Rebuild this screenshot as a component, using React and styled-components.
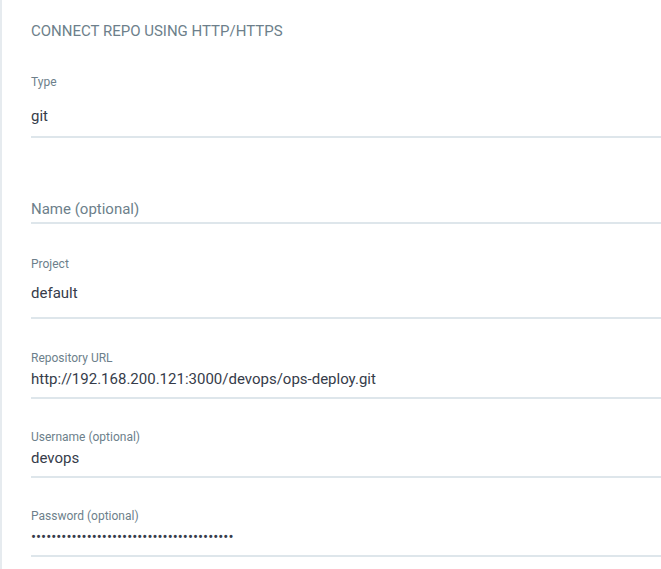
import React from "react";
import styled, { createGlobalStyle } from "styled-components";

const GlobalStyle = createGlobalStyle`
  html, body {
    margin: 0;
    padding: 0;
    background: #ffffff;
  }
  body {
    font-family: Roboto, "Liberation Sans", Arial, sans-serif;
  }
  * { box-sizing: border-box; }
`;

const Panel = styled.div`
  min-height: 569px;
  border-left: 2px solid #e6ebef;
  padding: 22px 0 0 29px;
  display: flex;
  flex-direction: column;
`;

const Title = styled.h6`
  margin: 0;
  font-size: 15px;
  line-height: 18px;
  font-weight: 400;
  color: #6d7f8b;
  letter-spacing: 0;
`;

const Field = styled.div`
  display: flex;
  flex-direction: column;
  margin-top: ${(p) => p.$top}px;
  padding-bottom: ${(p) => p.$pad}px;
  border-bottom: 2px solid #dee6eb;
`;

const Label = styled.label`
  display: block;
  height: 14px;
  font-size: 12px;
  line-height: 14px;
  color: #6d7f8b;
  margin-bottom: ${(p) => p.$gap}px;
`;

const Input = styled.input`
  display: block;
  width: 100%;
  height: 20px;
  border: none;
  outline: none;
  padding: 0;
  margin: 0;
  background: transparent;
  font-family: Roboto, "Liberation Sans", Arial, sans-serif;
  font-size: 15px;
  line-height: 20px;
  color: #363c4a;
  &::placeholder {
    color: #6d7f8b;
    opacity: 1;
  }
`;

const SelectValue = styled.div`
  height: 20px;
  font-size: 15px;
  line-height: 20px;
  color: #363c4a;
`;

export default function App() {
  return (
    <>
      <GlobalStyle />
      <Panel>
        <Title>CONNECT REPO USING HTTP/HTTPS</Title>

        <Field $top={35} $pad={10}>
          <Label $gap={17}>Type</Label>
          <SelectValue>git</SelectValue>
        </Field>

        <Field $top={42} $pad={3}>
          <Label $gap={5} />
          <Input placeholder="Name (optional)" readOnly />
        </Field>

        <Field $top={33} $pad={14}>
          <Label $gap={12}>Project</Label>
          <SelectValue>default</SelectValue>
        </Field>

        <Field $top={32} $pad={8}>
          <Label $gap={4}>Repository URL</Label>
          <Input readOnly value="http://192.168.200.121:3000/devops/ops-deploy.git" />
        </Field>

        <Field $top={31} $pad={8}>
          <Label $gap={4}>Username (optional)</Label>
          <Input readOnly value="devops" />
        </Field>

        <Field $top={31} $pad={8}>
          <Label $gap={4}>Password (optional)</Label>
          <Input type="password" readOnly value="ops-deploy-password-1234567890abcdefghij" />
        </Field>
      </Panel>
    </>
  );
}
